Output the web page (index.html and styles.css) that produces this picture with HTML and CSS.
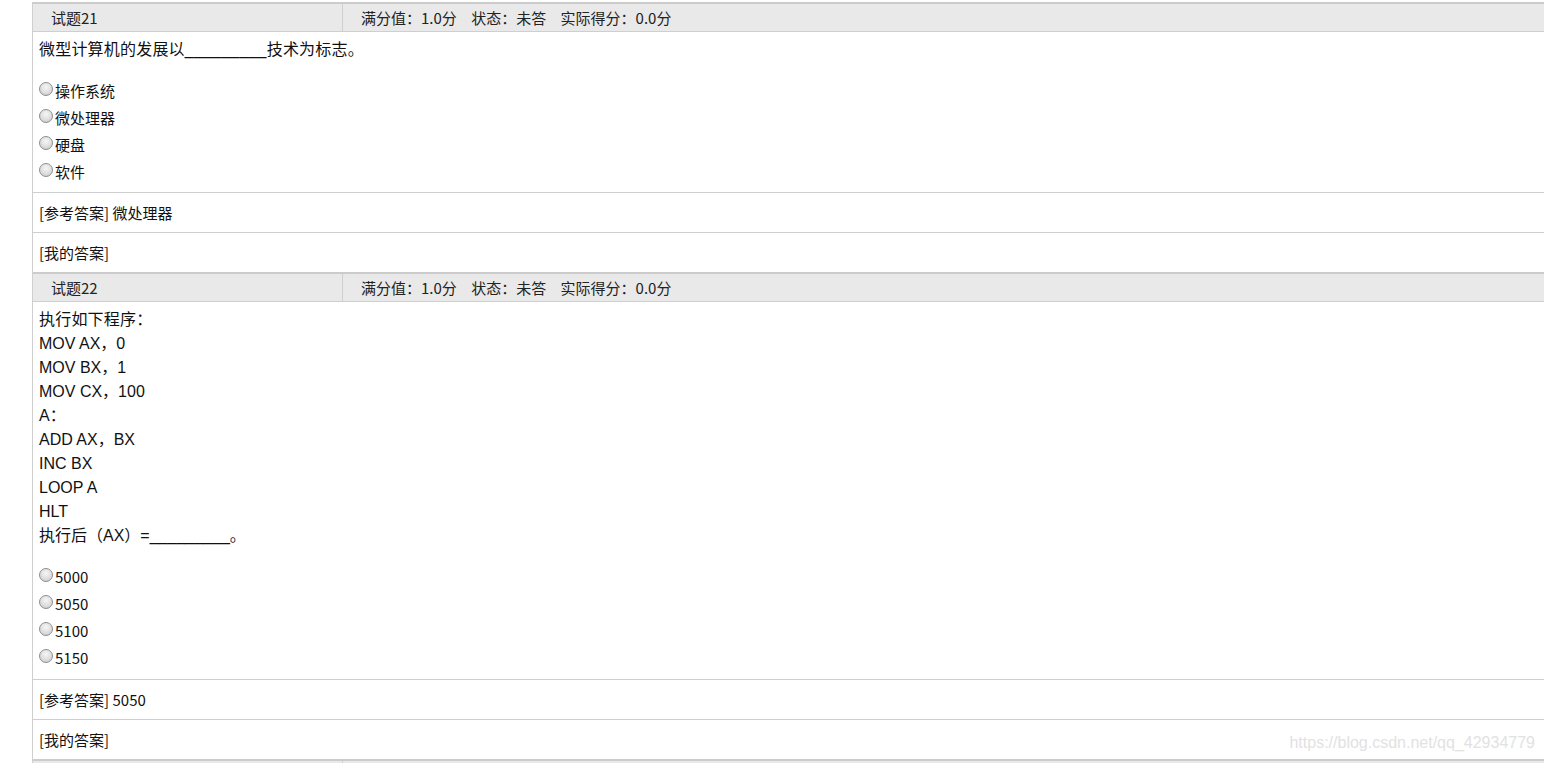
FILE: index.html
```html
<!DOCTYPE html>
<html lang="zh-CN">
<head>
    <meta charset="UTF-8">
    <title>试卷</title>
    <link rel="stylesheet" href="styles.css">
</head>
<body>
    <div class="paper">

        <div class="question">
            <div class="q-head">
                <div class="q-no">试题21</div>
                <div class="q-info">
                    <span>满分值：1.0分</span>
                    <span>状态：未答</span>
                    <span>实际得分：0.0分</span>
                </div>
            </div>
            <div class="q-body">
                <div class="q-text">
                    <div>微型计算机的发展以_________技术为标志。</div>
                </div>
                <ul class="options">
                    <li><input type="radio" name="q21">操作系统</li>
                    <li><input type="radio" name="q21">微处理器</li>
                    <li><input type="radio" name="q21">硬盘</li>
                    <li><input type="radio" name="q21">软件</li>
                </ul>
            </div>
            <div class="q-row">[参考答案] 微处理器</div>
            <div class="q-row">[我的答案]</div>
        </div>

        <div class="question">
            <div class="q-head">
                <div class="q-no">试题22</div>
                <div class="q-info">
                    <span>满分值：1.0分</span>
                    <span>状态：未答</span>
                    <span>实际得分：0.0分</span>
                </div>
            </div>
            <div class="q-body q-body-long">
                <div class="q-text">
                    <div>执行如下程序：</div>
                    <div>MOV AX，0</div>
                    <div>MOV BX，1</div>
                    <div>MOV CX，100</div>
                    <div>A：</div>
                    <div>ADD AX，BX</div>
                    <div>INC BX</div>
                    <div>LOOP A</div>
                    <div>HLT</div>
                    <div>执行后（AX）=_________。</div>
                </div>
                <ul class="options">
                    <li><input type="radio" name="q22">5000</li>
                    <li><input type="radio" name="q22">5050</li>
                    <li><input type="radio" name="q22">5100</li>
                    <li><input type="radio" name="q22">5150</li>
                </ul>
            </div>
            <div class="q-row">[参考答案] 5050</div>
            <div class="q-row">[我的答案]</div>
        </div>

        <!-- next question starts just below the fold -->
        <div class="question">
            <div class="q-head">
                <div class="q-no"></div>
                <div class="q-info"></div>
            </div>
        </div>

    </div>

    <div class="watermark">https://blog.csdn.net/qq_42934779</div>
</body>
</html>
```

FILE: styles.css
```css
*{
    margin: 0;
    padding: 0;
    list-style: none;
    box-sizing: border-box;
}

body{
    padding-top: 2px;
    color: #111;
    font-family: "Noto Sans CJK SC", "Liberation Sans", sans-serif;
    background-color: #fff;
    overflow: hidden;
}

.paper{
    margin-left: 32px;
    border-left: 1px solid #cfcfcf;
}

.question{
    border-top: 2px solid #cccccc;
}

.q-head{
    display: flex;
    height: 28px;
    background-color: #e9e9e9;
    border-bottom: 1px solid #cfcfcf;
    font-size: 15px;
    line-height: 27px;
    color: #222;
}

.q-no{
    width: 310px;
    padding-left: 18px;
    border-right: 1px solid #cfcfcf;
}

.q-info{
    padding-left: 18px;
}

.q-info span{
    margin-right: 11px;
}

.q-body{
    padding: 6px 6px 8px;
}

.q-body-long{
    padding-bottom: 9px;
}

.q-text{
    font-family: "Liberation Sans", "Noto Sans CJK SC", sans-serif;
    font-size: 16px;
    line-height: 24px;
}

.q-text div:first-child{
    letter-spacing: 0.2px;
}

.options{
    margin-top: 14px;
}

.options li{
    height: 27px;
    display: flex;
    align-items: center;
    font-size: 15px;
    padding-top: 2px;
}

.options input{
    appearance: none;
    width: 14px;
    height: 14px;
    margin: -4px 2px 0 0;
    border-radius: 50%;
    border: 1px solid #8e8e8e;
    background: radial-gradient(circle at 50% 35%, #f6f6f6 0%, #dedede 55%, #c4c4c4 100%);
}

.q-row{
    height: 40px;
    border-top: 1px solid #cfcfcf;
    padding-left: 6px;
    font-size: 15px;
    line-height: 39px;
}

.watermark{
    position: absolute;
    right: 9px;
    top: 734px;
    font-family: "Liberation Sans", sans-serif;
    font-size: 16px;
    color: #e2e2e2;
}
```
